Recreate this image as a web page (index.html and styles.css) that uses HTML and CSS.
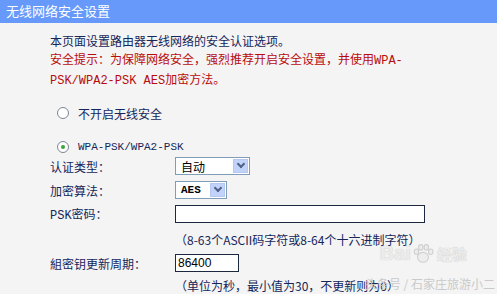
FILE: index.html
```html
<!DOCTYPE html>
<html lang="zh-CN">
<head>
  <meta charset="UTF-8">
  <title>无线网络安全设置</title>
  <link rel="stylesheet" href="styles.css">
</head>
<body>
  <div class="panel">
    <div class="title-bar">无线网络安全设置</div>
    <div class="content">
      <p class="intro">本页面设置路由器无线网络的安全认证选项。</p>
      <p class="warn">安全提示：为保障网络安全，强烈推荐开启安全设置，并使用WPA-<br>PSK/WPA2-PSK AES加密方法。</p>

      <div class="option off">
        <span class="radio"></span>
        <span>不开启无线安全</span>
      </div>
      <div class="option on">
        <span class="radio checked"></span>
        <span class="mono">WPA-PSK/WPA2-PSK</span>
      </div>

      <div class="row">
        <span class="label">认证类型：</span>
        <div class="select wide"><span>自动</span><i class="arrow"></i></div>
      </div>
      <div class="row">
        <span class="label">加密算法：</span>
        <div class="select narrow"><span class="mono">AES</span><i class="arrow"></i></div>
      </div>
      <div class="row">
        <span class="label"><span class="mono">PSK</span>密码：</span>
        <div class="input psk"></div>
      </div>
      <div class="row hint tall">（8-63个ASCII码字符或8-64个十六进制字符）</div>
      <div class="row short">
        <span class="label">組密钥更新周期：</span>
        <div class="input period">86400</div>
      </div>
      <div class="row hint short">（单位为秒，最小值为30，不更新则为0）</div>
    </div>

    <div class="watermark">
      <div class="logo">
        <span>Bai</span>
        <svg class="paw" width="22" height="22" viewBox="0 0 20 20">
          <ellipse cx="10" cy="13" rx="5" ry="4.5" fill="#ededed" stroke="#cfcfcf"/>
          <ellipse cx="4" cy="8" rx="2" ry="2.5" fill="#ededed" stroke="#cfcfcf"/>
          <ellipse cx="8" cy="4" rx="2" ry="2.5" fill="#ededed" stroke="#cfcfcf"/>
          <ellipse cx="13" cy="4" rx="2" ry="2.5" fill="#ededed" stroke="#cfcfcf"/>
          <ellipse cx="17" cy="8" rx="2" ry="2.5" fill="#ededed" stroke="#cfcfcf"/>
        </svg>
        <span class="cn">经验</span>
      </div>
      <div class="credit">头条号 / 石家庄旅游小二</div>
    </div>
  </div>
</body>
</html>
```

FILE: styles.css
```css
body {
  margin: 0;
  background: #f4f4f4;
  font-family: "Noto Sans CJK SC", "Liberation Sans", sans-serif;
  font-size: 12px;
  color: #14265a;
}

.panel {
  position: relative;
  width: 497px;
  height: 294px;
  overflow: hidden;
}

.title-bar {
  height: 23px;
  line-height: 22px;
  padding-left: 6px;
  background: #6699fa;
  color: #fff;
  font-size: 13px;
}

.content {
  padding-left: 50px;
  padding-top: 8px;
}

.intro,
.warn {
  margin: 0;
  line-height: 20px;
}

.warn {
  color: #b80c0c;
}

.mono,
.warn {
  font-family: "Liberation Mono", "Noto Sans CJK SC", monospace;
}

.option {
  display: flex;
  align-items: center;
  gap: 9px;
  padding-left: 7px;
  height: 14px;
}

.option.off {
  margin-top: 15px;
}

.option.on {
  margin-top: 20px;
}

.option .mono {
  font-size: 11px;
}

.radio {
  width: 10px;
  height: 10px;
  border: 1px solid #7a8794;
  border-radius: 50%;
  background: #fff;
  display: flex;
  align-items: center;
  justify-content: center;
}

.radio.checked::after {
  content: "";
  width: 4px;
  height: 4px;
  border-radius: 50%;
  background: #3aa33a;
}

.row {
  display: flex;
  align-items: center;
  height: 24px;
}

.row.tall {
  height: 26px;
}

.row.short {
  height: 22px;
}

.label {
  width: 125px;
  flex: none;
}

.select {
  height: 16px;
  border: 1px solid #7f9db9;
  background: #fff;
  display: flex;
  align-items: center;
  justify-content: space-between;
  padding-left: 5px;
  padding-right: 1px;
  color: #000;
}

.select.wide {
  width: 67px;
}

.select.narrow {
  width: 44px;
}

.select .mono {
  font-size: 11px;
  font-weight: bold;
}

.arrow {
  width: 15px;
  height: 14px;
  background: #c1d3fb;
  border: 1px solid #b4c8f0;
  box-sizing: border-box;
  display: flex;
  align-items: center;
  justify-content: center;
}

.arrow::after {
  content: "";
  width: 4px;
  height: 4px;
  border-right: 2px solid #4d6185;
  border-bottom: 2px solid #4d6185;
  transform: translateY(-2px) rotate(45deg);
}

.input {
  height: 16px;
  border: 1px solid #1c2840;
  background: #fff;
  color: #000;
  line-height: 16px;
  padding-left: 2px;
  font-family: "Liberation Sans", sans-serif;
}

.psk {
  width: 246px;
}

.period {
  width: 60px;
}

.row.hint {
  padding-left: 125px;
}

.watermark {
  position: absolute;
  right: 0;
  bottom: 0;
  text-align: right;
}

.logo {
  display: flex;
  align-items: center;
  justify-content: flex-end;
  gap: 1px;
  font-family: "Liberation Sans", sans-serif;
  font-size: 20px;
  font-weight: bold;
  color: #ececec;
  text-shadow: 0 0 1px #bdbdbd;
  margin-right: 30px;
  margin-bottom: 10px;
}

.logo .cn {
  font-family: "Noto Sans CJK SC", sans-serif;
  font-size: 15px;
  margin-left: 2px;
}

.credit {
  font-size: 12px;
  color: #cacaca;
  padding-right: 2px;
  padding-bottom: 2px;
}
```
